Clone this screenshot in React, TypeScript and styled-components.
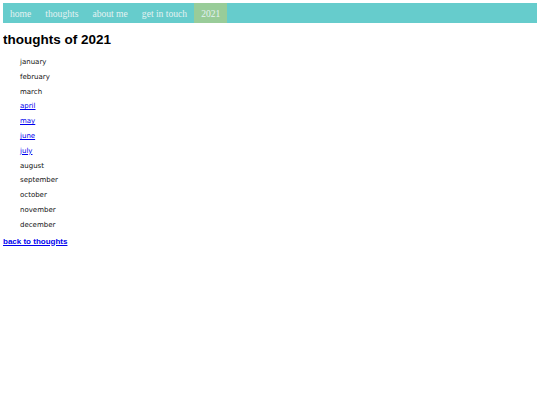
import React from 'react';
import styled, { createGlobalStyle } from 'styled-components';

const GlobalStyle = createGlobalStyle`
  body {
    margin: 3px;
    background: #fff;
    font-family: "Liberation Sans", Arial, sans-serif;
  }
`;

const Nav = styled.ul`
  list-style: none;
  margin: 0;
  padding: 0;
  display: flex;
  background-color: #66cccc;
  height: 20px;
`;

const NavItem = styled.li<{ $active?: boolean }>`
  display: flex;
  align-items: center;
  padding: 0 7px;
  background-color: ${(p) => (p.$active ? '#99cc99' : 'transparent')};

  a {
    font-family: "Liberation Serif", "Times New Roman", serif;
    font-size: 9.6px;
    color: #e4f2f2;
    text-decoration: none;
  }
`;

const Title = styled.h2`
  font-size: 13.5px;
  line-height: 16px;
  font-weight: bold;
  margin: 9px 0 7px;
  color: #000;
`;

const MonthList = styled.ul`
  list-style: none;
  margin: 0;
  padding: 0 0 0 17px;
  display: flex;
  flex-direction: column;
`;

const Month = styled.li`
  font-family: "DejaVu Sans", Verdana, sans-serif;
  font-size: 7px;
  line-height: 14.8px;
  color: #111;

  a {
    color: #0000ee;
  }
`;

const BackLink = styled.a`
  display: block;
  width: fit-content;
  margin-top: 4px;
  font-size: 8px;
  line-height: 9px;
  font-weight: bold;
  color: #0000ee;
`;

const navItems = ['home', 'thoughts', 'about me', 'get in touch', '2021'];

const months: { name: string; link?: boolean }[] = [
  { name: 'january' },
  { name: 'february' },
  { name: 'march' },
  { name: 'april', link: true },
  { name: 'may', link: true },
  { name: 'june', link: true },
  { name: 'july', link: true },
  { name: 'august' },
  { name: 'september' },
  { name: 'october' },
  { name: 'november' },
  { name: 'december' },
];

export default function App() {
  return (
    <>
      <GlobalStyle />
      <Nav>
        {navItems.map((item) => (
          <NavItem key={item} $active={item === '2021'}>
            <a href="#">{item}</a>
          </NavItem>
        ))}
      </Nav>
      <Title>thoughts of 2021</Title>
      <MonthList>
        {months.map((m) => (
          <Month key={m.name}>{m.link ? <a href="#">{m.name}</a> : m.name}</Month>
        ))}
      </MonthList>
      <BackLink href="#">back to thoughts</BackLink>
    </>
  );
}
